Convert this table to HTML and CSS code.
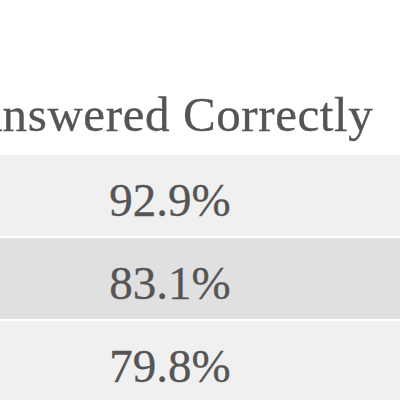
FILE: index.html
```html
<!DOCTYPE html>
<html>
<head>
<meta charset="utf-8">
<link rel="stylesheet" href="styles.css">
</head>
<body>
<div class="table">
  <div class="head">Answered Correctly</div>
  <div class="row odd">92.9%</div>
  <div class="row even">83.1%</div>
  <div class="row odd">79.8%</div>
</div>
</body>
</html>
```
FILE: styles.css
```css
html, body {
  margin: 0;
  padding: 0;
  background: #ffffff;
  overflow: hidden;
  width: 400px;
  height: 400px;
}
.table {
  margin-left: -60px;
  width: 460px;
  display: flex;
  flex-direction: column;
  gap: 2px;
  font-family: "Liberation Serif", "Times New Roman", serif;
  color: #555555;
  text-align: center;
  -webkit-text-stroke: 0.3px #555555;
}
.head {
  height: 155px;
  box-sizing: border-box;
  padding-top: 87px;
  font-size: 49px;
  line-height: 56px;
  letter-spacing: 0.6px;
  margin-bottom: -2px;
}
.row {
  height: 81px;
  box-sizing: border-box;
  padding-top: 17px;
  font-size: 47px;
  line-height: 56px;
}
.odd { background: #f0f0f0; }
.even { background: #e0e0e0; }
```
